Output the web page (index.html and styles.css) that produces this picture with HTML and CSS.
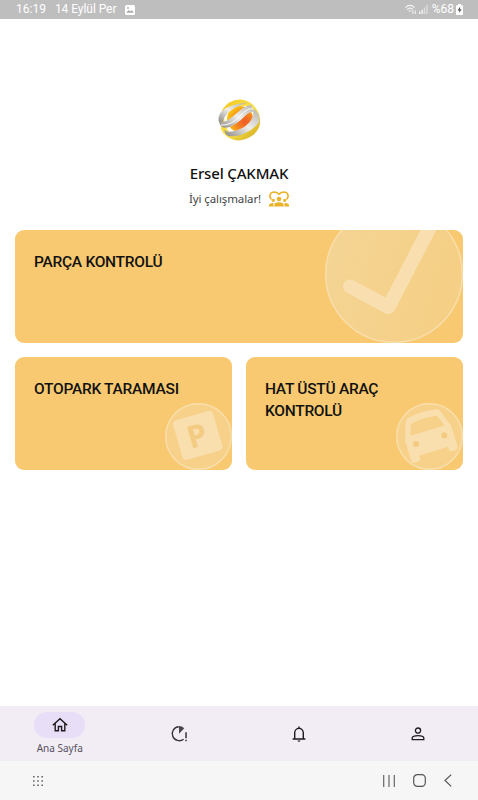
FILE: index.html
```html
<!DOCTYPE html>
<html lang="tr">
<head>
  <meta charset="UTF-8" />
  <meta name="viewport" content="width=device-width, initial-scale=1.0"/>
  <title>Ana Sayfa</title>
  <link rel="stylesheet" href="styles.css">
</head>
<body>

  <header class="status-bar">
    <span class="time">16:19</span>
    <span class="date">14 Eylül Per</span>
    <svg class="status-image" width="10" height="10" viewBox="0 0 10 10">
      <rect width="10" height="10" rx="1.5" fill="#fff"/>
      <path d="M1.2 7.8L3.6 5l1.6 1.6L6.6 5l2.2 2.8z" fill="#aaa"/>
      <circle cx="3" cy="3" r=".9" fill="#aaa"/>
    </svg>
    <div class="status-right">
      <svg width="12" height="11" viewBox="0 0 12 11" fill="none" stroke="#f4f4f4" stroke-width="1.1">
        <path d="M.5 3.6Q5 -.8 9.5 3.6M2 5.6Q5 2.8 8 5.6M3.6 7.4Q5 6.2 6.4 7.4"/>
        <path d="M8 10V6.5M10.3 6.5V10" stroke-width="1"/>
      </svg>
      <svg width="9" height="9" viewBox="0 0 9 9">
        <path d="M0 6.5h1.4V9H0zM2.4 4.8h1.4V9H2.4z" fill="#f4f4f4"/>
        <path d="M4.8 2.6h1.4V9H4.8zM7.2 0h1.4v9H7.2z" fill="#dedede"/>
      </svg>
      <span class="battery-text">%68</span>
      <svg width="7" height="11" viewBox="0 0 7 11">
        <path d="M2 0h3v1.2h1.2q.8 0 .8.8v8q0 1-.8 1H.8Q0 11 0 10V2q0-.8.8-.8H2z" fill="#fff"/>
        <path d="M4.2 2.6L1.5 6.4h1.7v2.4l2.5-3.6H4z" fill="#555"/>
      </svg>
    </div>
  </header>

  <main>
    <section class="profile">
      <svg class="logo" width="44" height="44" viewBox="0 0 44 44">
        <defs>
          <linearGradient id="gold" x1="0" y1="0" x2="1" y2="1">
            <stop offset="0" stop-color="#f3c316"/>
            <stop offset=".5" stop-color="#f9e34c"/>
            <stop offset="1" stop-color="#cfa51a"/>
          </linearGradient>
          <linearGradient id="silver" x1="0" y1="1" x2="1" y2="0">
            <stop offset="0" stop-color="#8b8780"/>
            <stop offset=".5" stop-color="#efeeec"/>
            <stop offset="1" stop-color="#b5b2ac"/>
          </linearGradient>
          <radialGradient id="core" cx=".68" cy=".6" r=".65">
            <stop offset="0" stop-color="#ee5a26"/>
            <stop offset=".5" stop-color="#f58420"/>
            <stop offset="1" stop-color="#fcc012"/>
          </radialGradient>
        </defs>
        <path d="M5 12Q12 1 24 1.500 37 3 42 16 46 29 36 37 27 44 17 42 7 39 4 31z" fill="url(#gold)"/>
        <path d="M8 14Q22 4 36 10L37 28Q27 36 12 34 5 24 8 14z" fill="#fff"/>
        <ellipse cx="23" cy="21" rx="13" ry="13" fill="url(#core)"/>
        <path d="M1.500 23Q1 14 9 10 20 5 30 5 19 8 12 14 7 18 6 24 3 26 1.500 23z" fill="url(#silver)"/>
        <path d="M2 24Q4 32 13 29 20 26 27 19 34 12 38 15L34 7Q29 7 20 15 10 24 5 24z" fill="url(#silver)"/>
        <path d="M37 11Q44 17 42 24 37 32 24 37 16 39 11 38 8 36 7 32 12 36 23 31 37 25 37 11z" fill="url(#silver)"/>
        <path d="M4 27Q14 28 23 18 31 9 36 11" fill="none" stroke="#fff" stroke-width="1"/>
      </svg>
      <h1>Ersel ÇAKMAK</h1>
      <div class="greeting">
        <p>İyi çalışmalar!</p>
        <svg width="20" height="16" viewBox="0 0 20 16">
          <path d="M2.500 8.500Q.8 6.500.9 4.800 1.300 1.200 4.900 1 8 1 10 3.200 12 1 15.100 1 18.700 1.200 19.100 4.800 19.200 6.500 17.500 8.500" fill="none" stroke="#e9b32b" stroke-width="1.700"/>
          <g fill="#e9b32b">
            <circle cx="4.300" cy="9.300" r="1.600"/>
            <circle cx="15.700" cy="9.300" r="1.600"/>
            <circle cx="10" cy="8" r="2.300"/>
            <path d="M0 15.500v-1.600q.2-2 4.500-2L4.600 15.500zM20 15.500v-1.600q-.2-2-4.500-2l-.1 3.600zM5.300 15.500v-1.800q.5-2.400 4.700-2.400t4.700 2.400v1.800z"/>
          </g>
        </svg>
      </div>
    </section>

    <section class="cards">
      <a class="card card-wide">
        <h2>PARÇA KONTROLÜ</h2>
        <svg class="card-icon" width="138" height="138" viewBox="0 0 138 138">
          <defs>
            <linearGradient id="shade" x1="0" y1="0" x2="1" y2=".3">
              <stop offset="0" stop-color="#f4d596"/>
              <stop offset="1" stop-color="#f5cf85"/>
            </linearGradient>
          </defs>
          <circle cx="69" cy="69" r="68.300" fill="url(#shade)" stroke="#f8dfad" stroke-width="1.400"/>
          <path d="M25 81.500L63.500 102 106 20" fill="none" stroke="#f9dfb0" stroke-width="14" stroke-linecap="round" stroke-linejoin="round"/>
        </svg>
      </a>
      <a class="card">
        <h2>OTOPARK TARAMASI</h2>
        <svg class="card-icon" width="67" height="67" viewBox="0 0 67 67">
          <circle cx="33.500" cy="33.500" r="32.800" fill="#f7d18a" stroke="#f9dfad" stroke-width="1.400"/>
          <g transform="rotate(-16 32.500 32.500)">
            <rect x="12" y="12" width="41.500" height="41" rx="4" fill="#f9deae"/>
            <text class="parking" x="32" y="43.500" text-anchor="middle">P</text>
          </g>
        </svg>
      </a>
      <a class="card">
        <h2>HAT ÜSTÜ ARAÇ<br>KONTROLÜ</h2>
        <svg class="card-icon" width="67" height="67" viewBox="0 0 67 67">
          <circle cx="33.500" cy="33.500" r="32.800" fill="#f7d18a" stroke="#f9dfad" stroke-width="1.400"/>
          <g transform="translate(33 32.800) rotate(-17) scale(2.690) translate(-12 -13)">
            <path fill="#f9deae" d="M18.920 6.010C18.500 4.900 18 4.400 17 4.300q-5-.9-10 0C6 4.400 5.500 4.900 5.080 6.010L3 12v8c0 .55.45 1 1 1h1.400c.55 0 1-.45 1-1v-1h11.200v1c0 .55.45 1 1 1H20c.55 0 1-.45 1-1v-8zM5.400 11l1.300-3.700q.2-.6.800-.7 4.500-.6 9 0 .6.100.8.700L18.600 11z" fill-rule="evenodd"/>
            <circle cx="6.500" cy="14.500" r="1.100" fill="#f3ca80"/>
            <circle cx="17.500" cy="14.500" r="1.100" fill="#f3ca80"/>
          </g>
        </svg>
      </a>
    </section>
  </main>

  <nav class="tab-bar">
    <a class="tab active">
      <span class="pill">
        <svg width="16" height="16" viewBox="0 0 16 16" fill="none" stroke="#1d1b20" stroke-width="1.400">
          <path d="M.8 8.300L8 1.800l7.200 6.500M3.200 6.500v7.300h3.200V9.500h3.200v4.300h3.200V6.500"/>
        </svg>
      </span>
      <span class="label">Ana Sayfa</span>
    </a>
    <a class="tab">
      <svg width="18" height="18" viewBox="0 0 18 18">
        <path d="M8.800 1.700A7 7 0 1 0 13.600 14.200" fill="none" stroke="#37333b" stroke-width="1.400"/>
        <path d="M9 1a8 8 0 0 1 5.300 2.200L9 8.700z" fill="#49454f"/>
        <path d="M15.300 7.300h1.500v6h-1.500zM15.300 14.800h1.500v1.500h-1.500z" fill="#37333b"/>
      </svg>
    </a>
    <a class="tab">
      <svg width="14" height="16" viewBox="0 0 14 16" fill="none" stroke="#1d1b20" stroke-width="1.400">
        <path d="M.6 13h12.800M2.700 13V6.800a4.300 4.500 0 0 1 8.600 0V13M7 2.300V.4"/>
        <path d="M5.500 14.500h3q-.3 1.300-1.500 1.300t-1.500-1.300z" fill="#1d1b20" stroke="none"/>
      </svg>
    </a>
    <a class="tab">
      <svg width="14" height="14" viewBox="0 0 14 14" fill="none" stroke="#1d1b20" stroke-width="1.300">
        <circle cx="7" cy="3.600" r="2.600"/>
        <path d="M1.200 12.700v-1.800Q1.600 8.600 7 8.600t5.800 2.300v1.800z"/>
      </svg>
    </a>
  </nav>

  <footer class="system-bar">
    <svg width="10" height="10" viewBox="0 0 10 10" fill="#666">
      <path d="M0 0h1.600v1.600H0zM4.200 0h1.600v1.600H4.200zM8.400 0H10v1.600H8.400zM0 4.200h1.600v1.600H0zM4.200 4.200h1.600v1.600H4.200zM8.400 4.200H10v1.600H8.400zM0 8.400h1.600V10H0zM4.200 8.400h1.600V10H4.200zM8.400 8.400H10V10H8.400z"/>
    </svg>
    <div class="system-buttons">
      <svg width="12" height="12" viewBox="0 0 12 12" stroke="#666" stroke-width="1.200">
        <path d="M.7 0v12M6 0v12M11.300 0v12"/>
      </svg>
      <svg width="13" height="13" viewBox="0 0 13 13" fill="none" stroke="#555" stroke-width="1.200">
        <rect x=".7" y=".7" width="11.600" height="11.600" rx="3.600"/>
      </svg>
      <svg width="8" height="13" viewBox="0 0 8 13" fill="none" stroke="#555" stroke-width="1.200">
        <path d="M7.200.6L1 6.500l6.200 5.900"/>
      </svg>
    </div>
  </footer>

</body>
</html>
```

FILE: styles.css
```css
* {
  box-sizing: border-box;
}

body {
  font-family: Roboto, 'Liberation Sans', sans-serif;
  background: #fff;
  color: #111;
  margin: 0;
  height: 100vh;
  display: flex;
  flex-direction: column;
  overflow: hidden;
}

h1, h2, p {
  margin: 0;
}

svg {
  display: block;
  flex-shrink: 0;
}

.status-bar {
  height: 19px;
  flex-shrink: 0;
  background: #bebebe;
  color: #fff;
  font-size: 12px;
  line-height: 19px;
  display: flex;
  align-items: center;
  padding: 0 15px 0 16px;
}

.date {
  margin-left: 9px;
  letter-spacing: -0.05px;
}

.status-image {
  margin-left: 9px;
}

.status-right {
  margin-left: auto;
  display: flex;
  align-items: center;
  gap: 2px;
}

.battery-text {
  margin-left: 2px;
}

main {
  flex: 1;
  padding: 79px 15px 0;
}

.profile {
  display: flex;
  flex-direction: column;
  align-items: center;
}

h1 {
  font-family: 'Noto Sans', sans-serif;
  font-size: 15px;
  font-weight: 500;
  line-height: 20px;
  letter-spacing: -0.15px;
  margin-top: 21px;
}

.greeting {
  display: flex;
  align-items: center;
  gap: 8px;
  margin-top: 7px;
  height: 17px;
  font-family: 'Noto Sans', sans-serif;
  font-size: 11.5px;
  letter-spacing: -0.1px;
  color: #444;
}

.cards {
  display: grid;
  grid-template-columns: 1fr 1fr;
  grid-auto-rows: 113px;
  gap: 14px;
  margin-top: 23px;
}

.card {
  position: relative;
  overflow: hidden;
  background: #f8c970;
  border-radius: 9px;
  padding: 21px 0 0 19px;
}

.card-wide {
  grid-column: 1 / 3;
}

.card h2 {
  font-size: 15.5px;
  font-weight: 500;
  line-height: 22px;
  letter-spacing: -0.27px;
}

.card-icon {
  position: absolute;
  right: 0;
  bottom: 0;
}

.parking {
  font-family: 'Open Sans', sans-serif;
  font-size: 31px;
  font-weight: 700;
  fill: #f4cb82;
}

.tab-bar {
  height: 55px;
  flex-shrink: 0;
  background: #f2edf5;
  display: grid;
  grid-template-columns: repeat(4, 1fr);
}

.tab {
  display: flex;
  flex-direction: column;
  align-items: center;
  justify-content: center;
}

.pill {
  width: 51px;
  height: 26px;
  border-radius: 13px;
  background: #e8def8;
  display: flex;
  align-items: center;
  justify-content: center;
}

.label {
  font-family: 'Noto Sans', sans-serif;
  font-size: 10px;
  line-height: 14px;
  margin-top: 3px;
  color: #56515c;
}

.system-bar {
  height: 39px;
  flex-shrink: 0;
  background: #f6f6f6;
  display: flex;
  align-items: center;
  justify-content: space-between;
  padding: 0 26px 0 33px;
}

.system-buttons {
  display: flex;
  align-items: center;
  gap: 18px;
}
```
